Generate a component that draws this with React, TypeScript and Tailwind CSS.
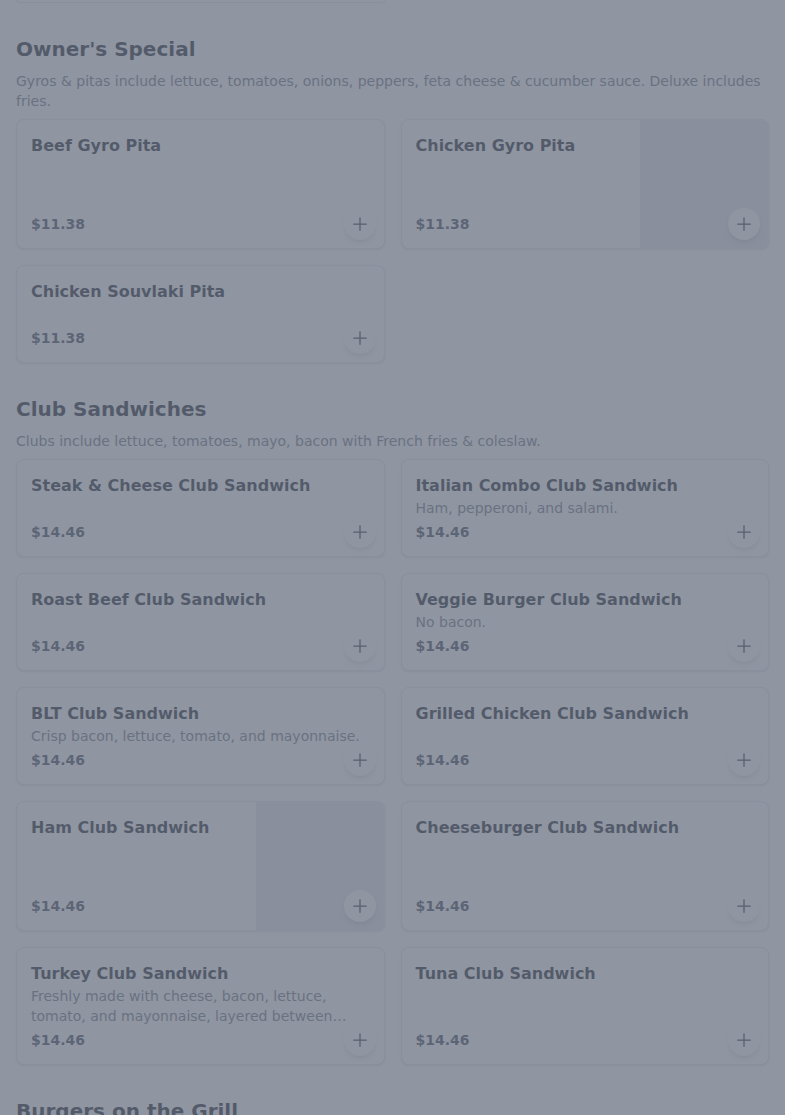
import React from 'react';
import { HiPlus } from 'react-icons/hi2';

type Item = {
  name: string;
  price: string;
  description?: string;
  image?: boolean;
};

type Section = {
  title: string;
  note?: string;
  items: Item[];
};

const sections: Section[] = [
  {
    title: "Owner's Special",
    note: 'Gyros & pitas include lettuce, tomatoes, onions, peppers, feta cheese & cucumber sauce. Deluxe includes fries.',
    items: [
      { name: 'Beef Gyro Pita', price: '11.38' },
      { name: 'Chicken Gyro Pita', price: '11.38', image: true },
      { name: 'Chicken Souvlaki Pita', price: '11.38' },
    ],
  },
  {
    title: 'Club Sandwiches',
    note: 'Clubs include lettuce, tomatoes, mayo, bacon with French fries & coleslaw.',
    items: [
      { name: 'Steak & Cheese Club Sandwich', price: '14.46' },
      { name: 'Italian Combo Club Sandwich', price: '14.46', description: 'Ham, pepperoni, and salami.' },
      { name: 'Roast Beef Club Sandwich', price: '14.46' },
      { name: 'Veggie Burger Club Sandwich', price: '14.46', description: 'No bacon.' },
      { name: 'BLT Club Sandwich', price: '14.46', description: 'Crisp bacon, lettuce, tomato, and mayonnaise.' },
      { name: 'Grilled Chicken Club Sandwich', price: '14.46' },
      { name: 'Ham Club Sandwich', price: '14.46', image: true },
      { name: 'Cheeseburger Club Sandwich', price: '14.46' },
      {
        name: 'Turkey Club Sandwich',
        price: '14.46',
        description:
          'Freshly made with cheese, bacon, lettuce, tomato, and mayonnaise, layered between three slices of toasted bread.',
      },
      { name: 'Tuna Club Sandwich', price: '14.46' },
    ],
  },
  {
    title: 'Burgers on the Grill',
    items: [],
  },
];

function MenuCard({ item }: { item: Item }) {
  return (
    <div className="relative flex overflow-hidden rounded-lg border border-gray-200 bg-white shadow-sm">
      <div className="flex flex-1 flex-col p-3.5">
        <h3 className="text-base font-bold leading-6 text-gray-900">{item.name}</h3>
        <p className="line-clamp-2 min-h-5 text-sm leading-5 text-gray-500">{item.description}</p>
        <p className="mt-auto pt-1 text-sm font-bold leading-5 text-gray-700">${item.price}</p>
      </div>
      {item.image && <div className="h-32 w-32 shrink-0 bg-gray-200" />}
      <button className="absolute bottom-2 right-2 flex h-8 w-8 items-center justify-center rounded-full bg-white text-gray-800 shadow-md">
        <HiPlus size={20} />
      </button>
    </div>
  );
}

export default function App() {
  return (
    <div className="relative min-h-screen bg-white" style={{ fontFamily: '"DejaVu Sans", sans-serif' }}>
      <div className="px-4">
        {/* tail of the previous section, scrolled off the top */}
        <div className="grid grid-cols-2 gap-4">
          <div className="h-[3px] rounded-b-lg border border-t-0 border-gray-200" />
        </div>

        {sections.map((section) => (
          <section key={section.title} className="mt-8">
            <h2 className="text-xl font-bold leading-7 text-gray-900">{section.title}</h2>
            {section.note && <p className="mt-2 text-sm leading-5 text-gray-500">{section.note}</p>}
            {section.items.length > 0 && (
              <div className="mt-2 grid grid-cols-2 gap-4">
                {section.items.map((item) => (
                  <MenuCard key={item.name} item={item} />
                ))}
              </div>
            )}
          </section>
        ))}
        <div className="h-40" />
      </div>

      {/* modal backdrop */}
      <div className="fixed inset-0 bg-gray-500/75" />
    </div>
  );
}
